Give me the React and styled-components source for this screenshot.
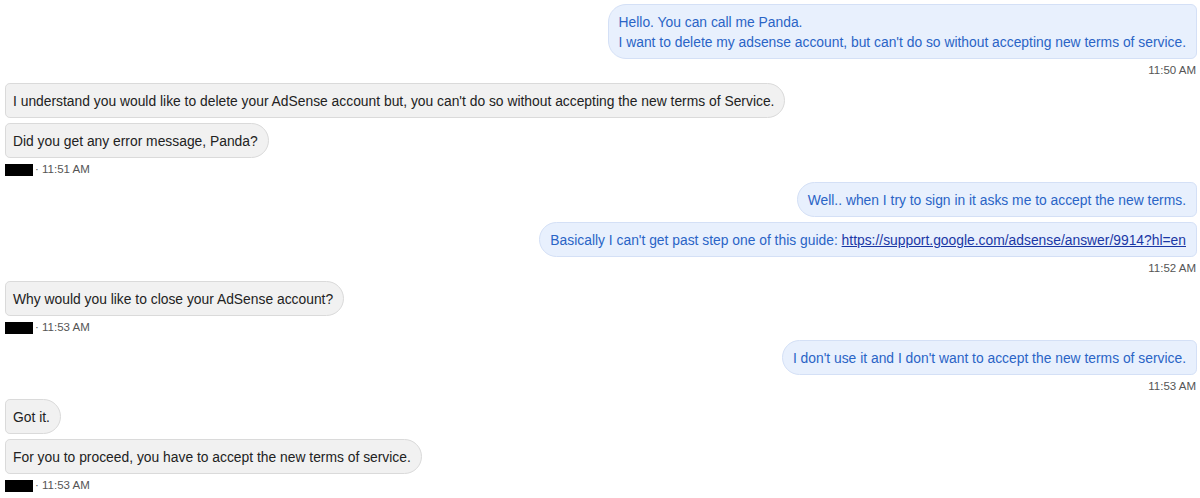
import React from 'react';
import styled, { createGlobalStyle } from 'styled-components';

const GlobalStyle = createGlobalStyle`
  body {
    margin: 0;
    background: #ffffff;
    font-family: Arial, "Liberation Sans", sans-serif;
  }
`;

const messages = [
  {
    from: 'user',
    time: '11:50 AM',
    bubbles: [
      [
        'Hello. You can call me Panda.',
        "I want to delete my adsense account, but can't do so without accepting new terms of service.",
      ],
    ],
  },
  {
    from: 'agent',
    time: '11:51 AM',
    bubbles: [
      [
        "I understand you would like to delete your AdSense account but, you can't do so without accepting the new terms of Service.",
      ],
      ['Did you get any error message, Panda?'],
    ],
  },
  {
    from: 'user',
    time: '11:52 AM',
    bubbles: [
      ['Well.. when I try to sign in it asks me to accept the new terms.'],
      ['link'],
    ],
  },
  {
    from: 'agent',
    time: '11:53 AM',
    bubbles: [['Why would you like to close your AdSense account?']],
  },
  {
    from: 'user',
    time: '11:53 AM',
    bubbles: [["I don't use it and I don't want to accept the new terms of service."]],
  },
  {
    from: 'agent',
    time: '11:53 AM',
    bubbles: [
      ['Got it.'],
      ['For you to proceed, you have to accept the new terms of service.'],
    ],
  },
];

const Chat = styled.div`
  display: flex;
  flex-direction: column;
  padding: 4px 3px 0 5px;
`;

const Group = styled.div`
  display: flex;
  flex-direction: column;
  align-items: ${(p) => (p.$user ? 'flex-end' : 'flex-start')};
  gap: 5px;
  margin-bottom: 6px;
`;

const Bubble = styled.div`
  box-sizing: border-box;
  padding: 6.5px 10px 6.5px ${(p) => (p.$user ? '10px' : '7px')};
  font-size: 13.85px;
  line-height: 20px;
  white-space: nowrap;
  border: 1px solid ${(p) => (p.$user ? '#d4e0f6' : '#dadada')};
  background: ${(p) => (p.$user ? '#e8f0fd' : '#f1f1f1')};
  color: ${(p) => (p.$user ? '#2a64c6' : '#222222')};
  border-radius: ${(p) => (p.$user ? '18px 6px 6px 18px' : '5px 18px 18px 5px')};
`;

const Link = styled.a`
  color: #1a37a5;
  text-decoration: underline;
`;

const Meta = styled.div`
  display: flex;
  align-items: center;
  gap: 2px;
  margin-top: -1px;
  font-size: 11.5px;
  line-height: 14px;
  color: #555555;
  padding-right: ${(p) => (p.$user ? '1px' : '0')};
`;

const Redacted = styled.span`
  display: inline-block;
  width: 28px;
  height: 12px;
  margin-top: 2px;
  background: #000000;
`;

function renderLines(lines) {
  if (lines[0] === 'link') {
    return (
      <>
        Basically I can't get past step one of this guide:{' '}
        <Link href="#">https://support.google.com/adsense/answer/9914?hl=en</Link>
      </>
    );
  }
  return lines.map((line, i) => <div key={i}>{line}</div>);
}

export default function App() {
  return (
    <>
      <GlobalStyle />
      <Chat>
        {messages.map((m, i) => {
          const user = m.from === 'user';
          return (
            <Group key={i} $user={user}>
              {m.bubbles.map((b, j) => (
                <Bubble key={j} $user={user}>
                  {renderLines(b)}
                </Bubble>
              ))}
              <Meta $user={user}>
                {!user && <Redacted />}
                {user ? m.time : `· ${m.time}`}
              </Meta>
            </Group>
          );
        })}
      </Chat>
    </>
  );
}
